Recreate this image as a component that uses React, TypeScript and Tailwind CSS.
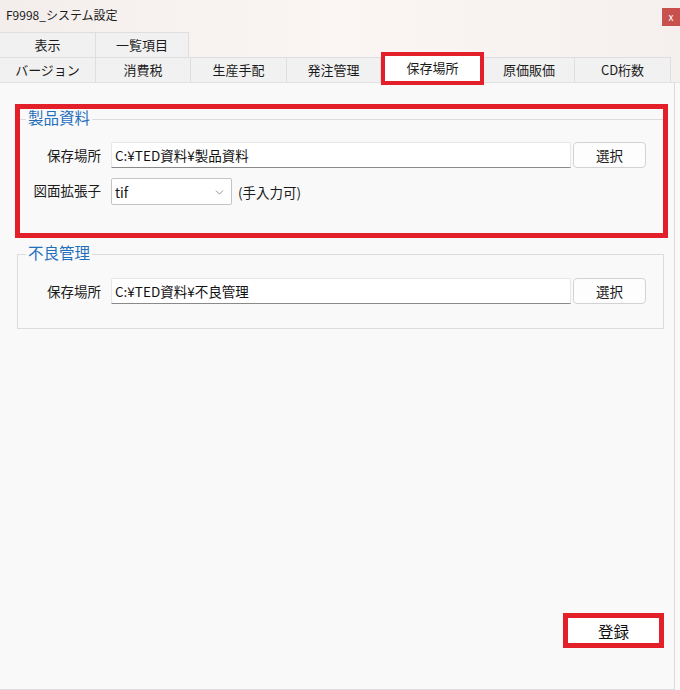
import { ChevronDown } from "lucide-react";

const FONT = "font-['Noto_Sans_CJK_JP','Liberation_Sans',sans-serif]";

function Tab({ label, width }: { label: string; width: string }) {
  return (
    <div
      className={`${width} h-[25px] shrink-0 flex items-center justify-center border-r border-t border-[#dedede] bg-[#f1f1f1] text-[13px] leading-[16px] text-[#1b1b1b]`}
    >
      {label}
    </div>
  );
}

function PathRow({ labelWidth, value }: { labelWidth: string; value: string }) {
  return (
    <div className="flex items-center">
      <span className={`${labelWidth} shrink-0 text-right text-[13.5px] leading-[18px] text-[#1b1b1b]`}>
        保存場所
      </span>
      <div className="ml-[10px] flex h-[26px] w-[460px] items-center rounded-t-[2px] border border-[#e6e6e6] border-b-[#8a8a8a] bg-white pl-[3px] text-[13.5px] leading-[18px] text-[#111]">
        {value}
      </div>
      <button className="ml-[2px] h-[26px] w-[73px] rounded-[4px] border border-[#d3d3d3] bg-[#fdfdfd] text-[13.5px] leading-[18px] text-[#1b1b1b]">
        選択
      </button>
    </div>
  );
}

function GroupLegend({ title, indent }: { title: string; indent: string }) {
  return (
    <legend className={`${indent} px-[2px] text-[15.5px] leading-[18px] text-[#1f6fbd]`}>
      <span className="relative -top-[2px]">{title}</span>
    </legend>
  );
}

export default function App() {
  return (
    <div className={`flex h-[690px] w-[680px] flex-col bg-[#f9f9f9] ${FONT}`}>
      <header className="bg-gradient-to-r from-[#f3eeec] via-[#fbf6f4] to-[#f5efed]">
        <div className="flex h-[32px] items-start justify-between">
          <span className="pl-[6px] pt-[7px] text-[12px] leading-[16px] text-[#1a1a1a]">
            F9998_システム設定
          </span>
          <button className="mt-[8px] flex h-[18px] w-[18px] items-center justify-center bg-[#c8514e] pb-[1px] text-[10px] leading-none text-white">
            x
          </button>
        </div>
        <div className="flex h-[25px]">
          <Tab label="表示" width="w-[96px]" />
          <Tab label="一覧項目" width="w-[93px]" />
        </div>
        <div className="flex h-[26px] items-start border-b border-[#e2e2e2]">
          <Tab label="バージョン" width="w-[96px]" />
          <Tab label="消費税" width="w-[95px]" />
          <Tab label="生産手配" width="w-[96px]" />
          <Tab label="発注管理" width="w-[94px]" />
          <div className="relative z-10 -mt-[5px] flex h-[33px] w-[103px] shrink-0 items-center justify-center border-[4.5px] border-[#e3202a] bg-white pb-[1px] text-[13px] leading-[16px] text-[#1b1b1b]">
            保存場所
          </div>
          <Tab label="原価販価" width="w-[91px]" />
          <Tab label="CD桁数" width="w-[96px]" />
        </div>
      </header>

      <main className="flex w-[675px] flex-1 flex-col border-b border-r border-[#dcdcdc] pl-[15px] pt-[21px]">
        <div className="w-[653px] border-[5px] border-[#e3202a] pt-[1px]">
          <fieldset className="border-0 border-t border-[#dcdcdc] pb-[28px]">
            <GroupLegend title="製品資料" indent="ml-[6px]" />
            <div className="flex flex-col gap-[10px] pt-[14px]">
              <PathRow labelWidth="w-[81px]" value="C:¥TED資料¥製品資料" />
              <div className="flex items-center">
                <span className="w-[81px] shrink-0 pb-[3px] text-right text-[13.5px] leading-[18px] text-[#1b1b1b]">
                  図面拡張子
                </span>
                <div className="ml-[10px] flex h-[27px] w-[121px] items-center justify-between rounded-[2px] border border-[#c4c4c4] bg-white pl-[3px] pr-[5px] text-[13.5px] leading-[18px] text-[#111]">
                  <span>tif</span>
                  <ChevronDown size={13} strokeWidth={1.2} className="mt-[2px] text-[#555]" />
                </div>
                <span className="ml-[6px] text-[13.5px] leading-[18px] text-[#1b1b1b]">(手入力可)</span>
              </div>
            </div>
          </fieldset>
        </div>

        <fieldset className="ml-[2px] mt-[7px] w-[647px] border border-[#dcdcdc] pb-[24px]">
          <GroupLegend title="不良管理" indent="ml-[8px]" />
          <div className="pt-[15px]">
            <PathRow labelWidth="w-[83px]" value="C:¥TED資料¥不良管理" />
          </div>
        </fieldset>

        <div className="mb-[41px] mr-[10px] mt-auto flex justify-end">
          <button className="flex h-[35px] w-[101px] items-center justify-center border-[5px] border-[#e3202a] bg-white text-[15.5px] leading-[18px] text-[#111]">
            登録
          </button>
        </div>
      </main>
    </div>
  );
}
